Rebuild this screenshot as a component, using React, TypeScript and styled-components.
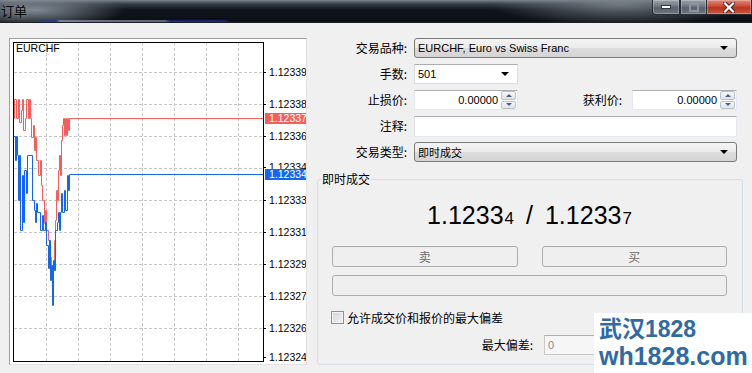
import React from 'react';
import styled, { createGlobalStyle } from 'styled-components';

const GlobalStyle = createGlobalStyle`
  html, body {
    margin: 0;
    padding: 0;
    background: #f0f0f0;
  }
  body {
    font-family: "Liberation Sans", "Noto Sans CJK SC", sans-serif;
    font-size: 12px;
    color: #000;
  }
`;

const UI_FONT = `"Liberation Sans", "Noto Sans CJK SC", sans-serif`;
const CJK_FONT = `"Noto Sans CJK SC", "Liberation Sans", sans-serif`;

// Window frame
const Window = styled.div`
  position: relative;
  width: 752px;
  height: 373px;
  overflow: hidden;
  background: #f0f0f0;
  display: flex;
  flex-direction: column;
`;

const TitleBar = styled.div`
  flex: none;
  height: 22px;
  display: flex;
  justify-content: space-between;
  align-items: flex-start;
  border-bottom: 1px solid #1c2026;
  background:
    linear-gradient(90deg, rgba(40,60,150,0) 38px, rgba(40,60,150,0.7) 42px, rgba(40,60,150,0.7) 56px, rgba(150,160,175,0.7) 60px, rgba(150,160,175,0.6) 165px, rgba(40,50,150,0.7) 170px, rgba(40,50,150,0.6) 224px, rgba(40,50,150,0) 230px) bottom / 100% 2px no-repeat,
    radial-gradient(ellipse 90px 18px at 35px 10px, rgba(140,150,160,0.9), rgba(140,150,160,0)),
    radial-gradient(ellipse 130px 22px at 620px 4px, rgba(125,133,142,0.85), rgba(125,133,142,0)),
    linear-gradient(180deg, #7a838d 0px, #353b44 4px, #10151c 10px, #0b0f15 100%);
`;

const TitleText = styled.span`
  padding: 2px 0 0 1px;
  font-family: ${CJK_FONT};
  font-size: 13px;
  line-height: 17px;
  color: #050505;
  text-shadow: 0 0 6px rgba(220, 225, 230, 0.35);
`;

const CaptionButtons = styled.div`
  display: flex;
  height: 15px;
`;

const CaptionButton = styled.div<{ $kind: 'min' | 'max' | 'close' }>`
  width: ${(p) => (p.$kind === 'close' ? 45 : p.$kind === 'min' ? 28 : 27)}px;
  height: 15px;
  box-sizing: border-box;
  display: flex;
  align-items: center;
  justify-content: center;
  border: 1px solid #2a2f36;
  border-top: none;
  border-left: ${(p) => (p.$kind === 'close' ? 'none' : '1px solid #2a2f36')};
  border-radius: ${(p) => (p.$kind === 'min' ? '0 0 0 4px' : '0')};
  background: ${(p) =>
    p.$kind === 'close'
      ? 'linear-gradient(180deg, #e08a7c 0%, #c84a36 45%, #b8321e 55%, #cf5a3c 100%)'
      : 'linear-gradient(180deg, #9aa2aa 0%, #6f7780 45%, #5a626b 55%, #6d757e 100%)'};
  box-shadow: inset 0 0 0 1px rgba(255, 255, 255, 0.25);
`;

const Body = styled.div`
  flex: 1;
  display: flex;
  gap: 10px;
  padding: 15px 0 0 9px;
`;

// Chart panel
const ChartFrame = styled.div`
  flex: none;
  width: 298px;
  height: 327px;
  box-sizing: border-box;
  border-top: 1px solid #a0a0a0;
  border-left: 1px solid #a0a0a0;
  border-right: 1px solid #e2e2e2;
  border-bottom: 1px solid #e2e2e2;
  background: #fff;
  & > svg {
    display: block;
  }
`;

// Right-hand order form
const Form = styled.div`
  flex: none;
  width: 426px;
  display: flex;
  flex-direction: column;
`;

const Rows = styled.div`
  display: flex;
  flex-direction: column;
  gap: 6px;
  padding-right: 6px;
`;

const FormRow = styled.div`
  height: 20px;
  display: flex;
  align-items: center;
  gap: 7px;
`;

const FieldLabel = styled.label<{ $width?: number }>`
  ${(p) => (p.$width ? `width: ${p.$width}px; flex: none;` : 'flex: 1; padding-right: 3px;')}
  text-align: right;
  font-family: ${CJK_FONT};
  font-size: 12px;
  line-height: 14px;
  color: #000;
  white-space: nowrap;
`;

const ComboBox = styled.div<{ $width?: number }>`
  ${(p) => (p.$width ? `width: ${p.$width}px; flex: none;` : 'flex: 1;')}
  height: 20px;
  box-sizing: border-box;
  display: flex;
  align-items: center;
  justify-content: space-between;
  padding: 0 8px 0 3px;
  border: 1px solid #7a7a7a;
  border-radius: 3px;
  background: linear-gradient(180deg, #f4f4f4 0%, #ebebeb 50%, #dddddd 51%, #d4d4d4 100%);
  font-family: ${UI_FONT};
  font-size: 11px;
`;

const ComboField = styled(ComboBox)`
  border: 1px solid #dcdcdc;
  border-top-color: #abadb3;
  border-radius: 0;
  background: #fff;
`;

const ComboArrow = styled.span`
  width: 0;
  height: 0;
  border-left: 4px solid transparent;
  border-right: 4px solid transparent;
  border-top: 4px solid #000;
`;

const EditBox = styled.div`
  flex: 1;
  height: 21px;
  box-sizing: border-box;
  border: 1px solid #e3e9ef;
  border-top-color: #abadb3;
  border-left-color: #e2e3ea;
  background: #fff;
`;

const SpinBox = styled.div<{ $width: number }>`
  width: ${(p) => p.$width}px;
  flex: none;
  height: 20px;
  box-sizing: border-box;
  display: flex;
  align-items: stretch;
  border: 1px solid #e3e9ef;
  border-top-color: #abadb3;
  background: #fff;
`;

const SpinValue = styled.span`
  flex: 1;
  text-align: right;
  padding-right: 3px;
  font-family: ${UI_FONT};
  font-size: 11px;
  line-height: 18px;
`;

const SpinButtons = styled.div`
  width: 15px;
  display: flex;
  flex-direction: column;
  gap: 1px;
  padding: 0 1px 0 0;
`;

const SpinButton = styled.div<{ $dir: 'up' | 'down' }>`
  flex: 1;
  display: flex;
  align-items: center;
  justify-content: center;
  border: 1px solid #b9c0c9;
  border-radius: 2px;
  background: linear-gradient(180deg, #f6f7f9, #dfe3e8);
  &::after {
    content: '';
    width: 0;
    height: 0;
    border-left: 3px solid transparent;
    border-right: 3px solid transparent;
    ${(p) => (p.$dir === 'up' ? 'border-bottom: 3px solid #4b5e80;' : 'border-top: 3px solid #4b5e80;')}
  }
`;

// Market execution group
const GroupBox = styled.fieldset`
  margin: 10px 0 0 0;
  padding: 0;
  min-inline-size: 0;
  border: 1px solid #d5dfe5;
  border-radius: 3px;
`;

const GroupLegend = styled.legend`
  margin-left: 3px;
  padding: 0 1px;
  font-family: ${CJK_FONT};
  font-size: 12px;
  line-height: 14px;
`;

const GroupContent = styled.div`
  display: flex;
  flex-direction: column;
  padding: 0 15px 9px 14px;
`;

const Quote = styled.div`
  margin-top: 14px;
  height: 30px;
  text-align: center;
  font-family: ${UI_FONT};
  font-size: 25px;
  line-height: 30px;
  color: #000;
`;

const QuoteSmall = styled.span`
  font-size: 17px;
  margin-left: 1px;
`;

const QuoteSlash = styled.span`
  margin: 0 12px 0 12px;
`;

const ActionRow = styled.div`
  margin-top: 16px;
  display: flex;
  gap: 24px;
`;

const ActionButton = styled.div`
  flex: 1;
  height: 21px;
  box-sizing: border-box;
  display: flex;
  align-items: center;
  justify-content: center;
  border: 1px solid #adadad;
  border-radius: 3px;
  background: #efefef;
  font-family: ${CJK_FONT};
  font-size: 12px;
  color: #6d6d6d;
`;

const WideBar = styled(ActionButton)`
  margin-top: 8px;
  flex: none;
`;

const CheckRow = styled.div`
  margin-top: 15px;
  height: 13px;
  display: flex;
  align-items: center;
  gap: 3px;
  margin-left: -1px;
`;

const CheckBox = styled.span`
  width: 13px;
  height: 13px;
  box-sizing: border-box;
  border: 1px solid #8f8f8f;
  background: linear-gradient(135deg, #d2d2d2, #f4f4f4);
  box-shadow: inset 0 0 0 1px #f4f4f4;
`;

const CheckLabel = styled.span`
  font-family: ${CJK_FONT};
  font-size: 12px;
  line-height: 14px;
`;

const DeviationRow = styled.div`
  margin-top: 11px;
  height: 20px;
  display: flex;
  align-items: center;
  gap: 11px;
`;

const DeviationInput = styled.div`
  width: 60px;
  height: 20px;
  box-sizing: border-box;
  padding-left: 3px;
  border: 1px solid #c9c9c9;
  border-top-color: #b0b0b0;
  background: #f6f6f6;
  font-family: ${UI_FONT};
  font-size: 11px;
  line-height: 18px;
  color: #8a8a8a;
`;

// Site watermark stamped over the lower-right corner
const Watermark = styled.div`
  position: absolute;
  left: 594px;
  top: 313px;
  width: 158px;
  height: 60px;
  background: #fff;
  display: flex;
  flex-direction: column;
  padding: 3px 0 0 5px;
  box-sizing: border-box;
  color: #2f6aa5;
  font-weight: 700;
`;

const WatermarkLine = styled.span<{ $size: number }>`
  font-family: "Liberation Sans", "Noto Sans CJK SC", sans-serif;
  font-size: ${(p) => p.$size}px;
  line-height: ${(p) => p.$size + 3}px;
  white-space: nowrap;
`;

type Pt = [number, number];

const ask: Pt[] = [
  [13, 136], [13, 118], [14, 118], [14, 99], [16, 99], [16, 118], [18, 118], [18, 99], [19, 99],
  [19, 122], [21, 110], [22, 99], [23, 130], [25, 118], [26, 99], [28, 118], [29, 99], [30, 118],
  [31, 137], [33, 125], [34, 150], [35, 137], [36, 160], [38, 175], [40, 160], [41, 185], [42, 200],
  [44, 223], [45, 210], [46, 230], [48, 240], [49, 257], [51, 265], [52, 287], [53, 270], [54, 240],
  [55, 220], [56, 190], [57, 200], [58, 170], [59, 155], [60, 175], [61, 140], [62, 125], [63, 118],
  [64, 135], [65, 118], [66, 135], [67, 118], [68, 130], [69, 118], [263, 118],
];

const bid: Pt[] = [
  [13, 222], [13, 136], [15, 160], [16, 136], [17, 155], [18, 200], [19, 155], [20, 230],
  [22, 175], [23, 222], [24, 170], [26, 193], [27, 155], [32, 155], [32, 200],
  [34, 210], [35, 222], [36, 203], [37, 212], [40, 212], [40, 230], [42, 215], [43, 230],
  [45, 222], [46, 245], [48, 268], [49, 240], [50, 280], [51, 265],
  [52, 305], [53, 260], [54, 270], [55, 230], [57, 222], [58, 212], [59, 230], [60, 212],
  [61, 193], [62, 212], [64, 190], [65, 210], [67, 175], [68, 190], [69, 174],
  [263, 174],
];

// step line: horizontal to the next x, then vertical to its y
const stepPath = (pts: Pt[]) =>
  pts
    .map(([x, y], i) => (i === 0 ? `M${x + 0.5},${y + 0.5}` : `H${x + 0.5}V${y + 0.5}`))
    .join('');

const gridY = [72, 104, 136, 168, 200, 232, 264, 296, 328];
const gridX = [46, 78, 110, 142, 174, 206, 238];
const axisLabels: [string, number][] = [
  ['1.12339', 72], ['1.12338', 104], ['1.12336', 136], ['1.12334', 167], ['1.12333', 200],
  ['1.12331', 232], ['1.12329', 264], ['1.12327', 296], ['1.12326', 328], ['1.12324', 357],
];

const RED = '#f45f5c';
const BLUE = '#1466f0';

const PriceChart: React.FC = () => (
  <svg width={296} height={325} viewBox="10 39 296 325">
    <g stroke="#c6c6c6" strokeWidth={1} strokeDasharray="3 2">
      {gridY.map((y) => (
        <line key={`h${y}`} x1={14} x2={263} y1={y + 0.5} y2={y + 0.5} />
      ))}
      {gridX.map((x) => (
        <line key={`v${x}`} x1={x + 0.5} x2={x + 0.5} y1={43} y2={361} />
      ))}
    </g>
    <path d={stepPath(ask)} fill="none" stroke={RED} strokeWidth={1} />
    <path d={stepPath(bid)} fill="none" stroke={BLUE} strokeWidth={1} />
    <rect x={13.5} y={42.5} width={250} height={319} fill="none" stroke="#000" strokeWidth={1} />
    <g stroke="#000">
      {axisLabels.map(([, y]) => (
        <line key={y} x1={263} x2={266} y1={y + 0.5} y2={y + 0.5} />
      ))}
    </g>
    <g fontFamily='"Liberation Sans", sans-serif' fontSize={10.5} fill="#000">
      {axisLabels.map(([t, y]) => (
        <text key={t + y} x={269} y={y + 4}>
          {t}
        </text>
      ))}
    </g>
    <rect x={265} y={113} width={42} height={11} fill={RED} />
    <rect x={265} y={169} width={42} height={11} fill={BLUE} />
    <g fontFamily='"Liberation Sans", sans-serif' fontSize={10.5} fill="#fff">
      <text x={269} y={122}>1.12337</text>
      <text x={269} y={178}>1.12334</text>
    </g>
    <text x={16} y={52} fontFamily='"Liberation Sans", sans-serif' fontSize={10.5} fill="#000">
      EURCHF
    </text>
  </svg>
);

const Spin: React.FC<{ width: number; value: string }> = ({ width, value }) => (
  <SpinBox $width={width}>
    <SpinValue>{value}</SpinValue>
    <SpinButtons>
      <SpinButton $dir="up" />
      <SpinButton $dir="down" />
    </SpinButtons>
  </SpinBox>
);

const App: React.FC = () => (
  <>
    <GlobalStyle />
    <Window>
      <TitleBar>
        <TitleText>订单</TitleText>
        <CaptionButtons>
          <CaptionButton $kind="min">
            <svg width="10" height="4" viewBox="0 0 10 4">
              <rect x="0.5" y="0.5" width="9" height="3" fill="#fff" stroke="#33383f" />
            </svg>
          </CaptionButton>
          <CaptionButton $kind="max">
            <svg width="10" height="9" viewBox="0 0 10 9">
              <rect x="1" y="1" width="8" height="7" fill="none" stroke="#8e959c" strokeWidth="2" />
            </svg>
          </CaptionButton>
          <CaptionButton $kind="close">
            <svg width="12" height="11" viewBox="0 0 12 11">
              <path d="M2 1.5 L10 9.5 M10 1.5 L2 9.5" stroke="#4a1a12" strokeWidth="4" strokeLinecap="square" />
              <path d="M2 1.5 L10 9.5 M10 1.5 L2 9.5" stroke="#fff" strokeWidth="2.2" strokeLinecap="square" />
            </svg>
          </CaptionButton>
        </CaptionButtons>
      </TitleBar>

      <Body>
        <ChartFrame>
          <PriceChart />
        </ChartFrame>

        <Form>
          <Rows>
            <FormRow>
              <FieldLabel $width={90}>交易品种:</FieldLabel>
              <ComboBox>
                <span>EURCHF, Euro vs Swiss Franc</span>
                <ComboArrow />
              </ComboBox>
            </FormRow>
            <FormRow>
              <FieldLabel $width={90}>手数:</FieldLabel>
              <ComboField $width={104}>
                <span>501</span>
                <ComboArrow />
              </ComboField>
            </FormRow>
            <FormRow>
              <FieldLabel $width={90}>止损价:</FieldLabel>
              <Spin width={104} value="0.00000" />
              <FieldLabel>获利价:</FieldLabel>
              <Spin width={105} value="0.00000" />
            </FormRow>
            <FormRow>
              <FieldLabel $width={90}>注释:</FieldLabel>
              <EditBox />
            </FormRow>
            <FormRow>
              <FieldLabel $width={90}>交易类型:</FieldLabel>
              <ComboBox>
                <span>即时成交</span>
                <ComboArrow />
              </ComboBox>
            </FormRow>
          </Rows>

          <GroupBox>
            <GroupLegend>即时成交</GroupLegend>
            <GroupContent>
              <Quote>
                1.1233<QuoteSmall>4</QuoteSmall>
                <QuoteSlash>/</QuoteSlash>
                1.1233<QuoteSmall>7</QuoteSmall>
              </Quote>
              <ActionRow>
                <ActionButton>卖</ActionButton>
                <ActionButton>买</ActionButton>
              </ActionRow>
              <WideBar />
              <CheckRow>
                <CheckBox />
                <CheckLabel>允许成交价和报价的最大偏差</CheckLabel>
              </CheckRow>
              <DeviationRow>
                <FieldLabel $width={201}>最大偏差:</FieldLabel>
                <DeviationInput>0</DeviationInput>
              </DeviationRow>
            </GroupContent>
          </GroupBox>
        </Form>
      </Body>

      <Watermark>
        <WatermarkLine $size={23}>武汉1828</WatermarkLine>
        <WatermarkLine $size={25}>wh1828.com</WatermarkLine>
      </Watermark>
    </Window>
  </>
);

export default App;
